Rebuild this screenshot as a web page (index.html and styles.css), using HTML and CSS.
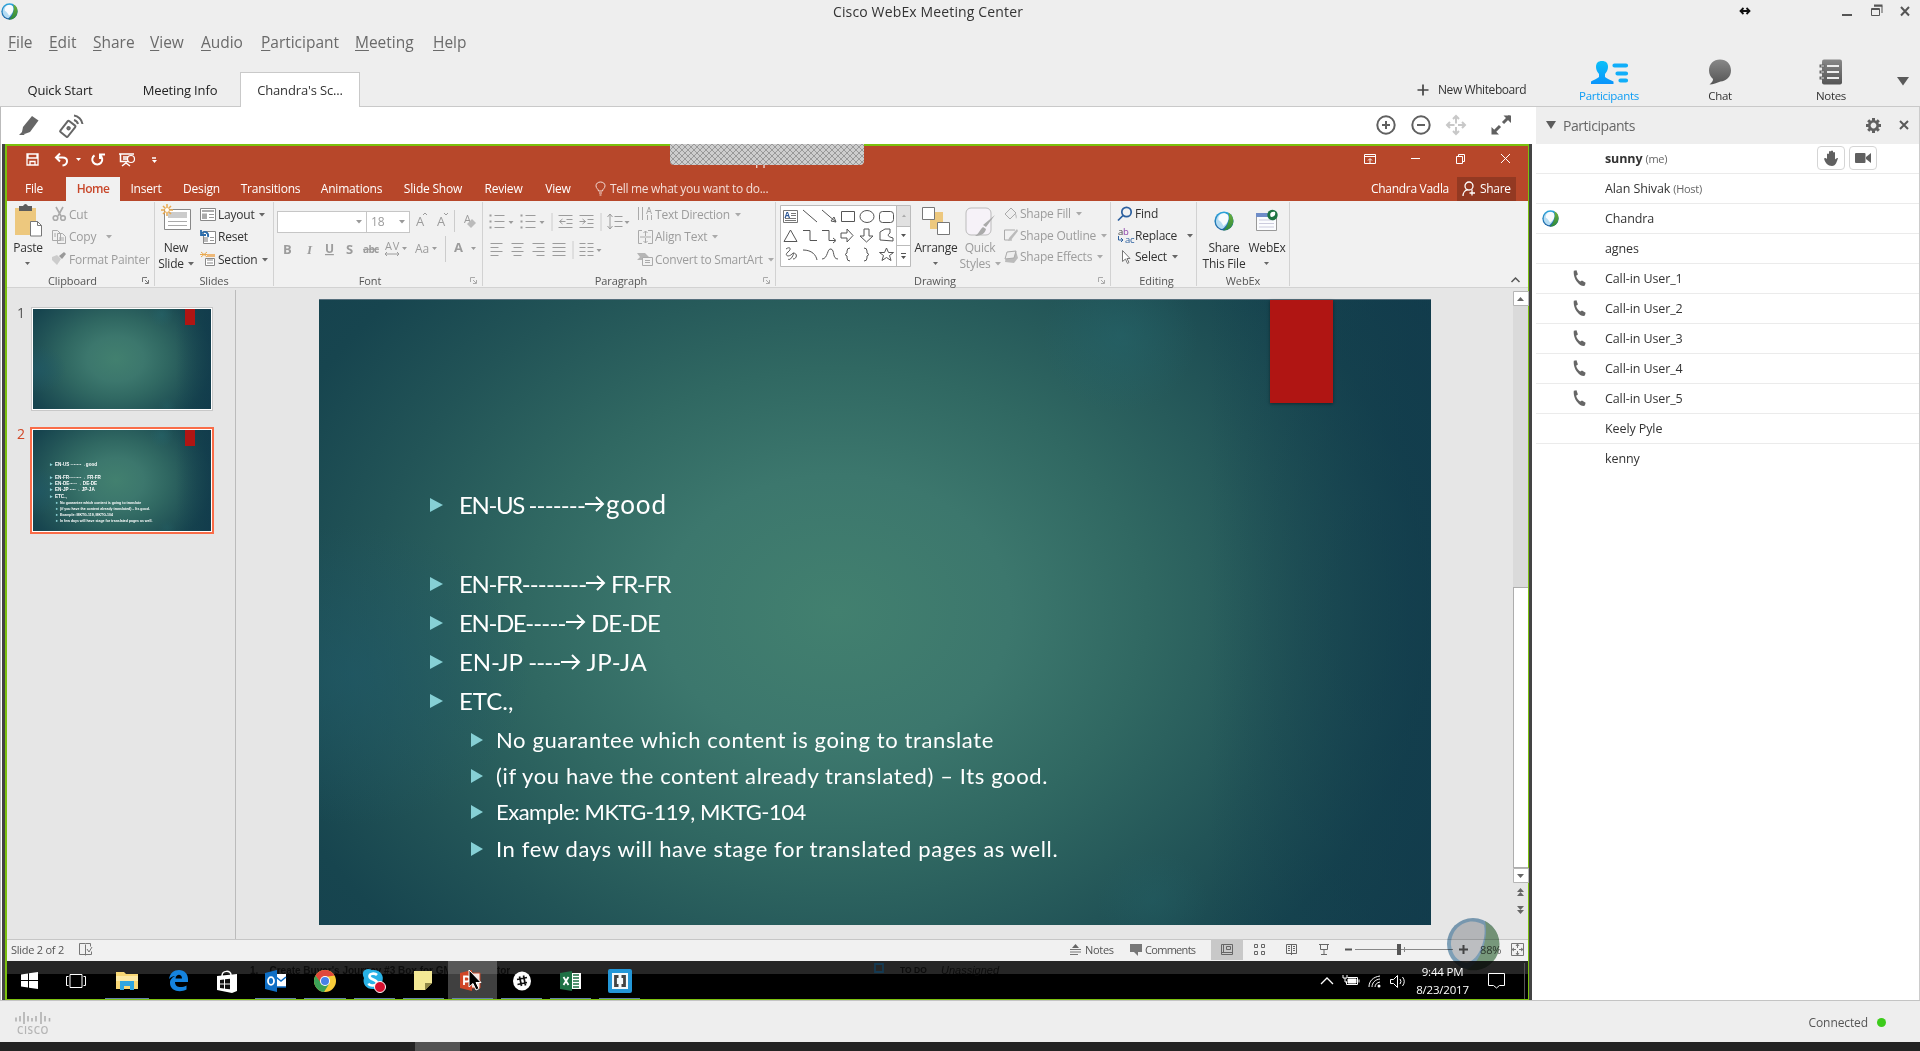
FILE: index.html
```html
<!DOCTYPE html>
<html lang="en">
<head>
<meta charset="utf-8">
<title>Cisco WebEx Meeting Center</title>
<link rel="stylesheet" href="styles.css">
</head>
<body>
<svg class="defs" width="0" height="0">
  <defs>
    <linearGradient id="orbBlue" x1="0" y1="0" x2="0" y2="1"><stop offset="0" stop-color="#2aa6dd"/><stop offset="1" stop-color="#1d5f9f"/></linearGradient>
    <linearGradient id="orbGreen" x1="0" y1="0" x2="0" y2="1"><stop offset="0" stop-color="#6fae3b"/><stop offset="1" stop-color="#2c8a3d"/></linearGradient>
    <linearGradient id="cyan" x1="0" y1="0" x2="0" y2="1"><stop offset="0" stop-color="#0cc0f8"/><stop offset="1" stop-color="#0a94fb"/></linearGradient>
    <linearGradient id="gray" x1="0" y1="0" x2="0" y2="1"><stop offset="0" stop-color="#888"/><stop offset="1" stop-color="#555"/></linearGradient>
    <pattern id="hatch" width="6" height="6" patternUnits="userSpaceOnUse"><rect width="6" height="6" fill="#cdcdcd"/><path d="M0 0L6 6M6 0L0 6" stroke="#8c8c8c" stroke-width=".8"/></pattern>
    <symbol id="orb" viewBox="0 0 20 20"><circle cx="10" cy="10" r="9.6" fill="url(#orbBlue)"/><path d="M14.5 1.6A9.6 9.6 0 0 1 9 19.5C14 16 16 8 14.5 1.6z" fill="url(#orbGreen)"/><path d="M14 4C9-.5 1.5 4 2 11c.3 4 3 6.300 6 7 3.500-1.500 8-8.500 6-14z" fill="#b4dcf3"/><path d="M14 4C9 0 3.500 4 4.500 9c2 1 3.500 3 5 6 4-3 6-6.500 4.500-11z" fill="#f7fbfe"/></symbol>
    <symbol id="caret" viewBox="0 0 6 4"><path d="M0 0h6L3 3.500z" fill="currentColor"/></symbol>
    <symbol id="launch" viewBox="0 0 7 7"><path d="M.5 5V.5H5M3 3l3 3M6.500 3v3.500H3" fill="none" stroke="currentColor"/></symbol>
    <symbol id="phone" viewBox="0 0 13 17"><path d="M.8.8l2.700-.6 1.400 4.400-1.800 1.200c.7 2.500 2 4.300 4 5.700l1.900-1.100 3.600 2.400-.7 2.800c-1.600.9-4 .1-6.200-1.900C2.200 10.500.2 5.500.8.800z" fill="#666"/></symbol>
    <symbol id="close" viewBox="0 0 10 10"><path d="M1 1l8 8M9 1L1 9" stroke="#595959" stroke-width="2" fill="none"/></symbol>
    <symbol id="arrow" viewBox="0 0 20 16"><path d="M0 8h18M11 1l7 7-7 7" fill="none" stroke="#fff" stroke-width="2"/></symbol>
  </defs>
</svg>
<div class="app">
  <header class="titlebar">
    <svg class="logo" width="17" height="17"><use href="#orb"/></svg>
    <h1>Cisco WebEx Meeting Center</h1>
    <div class="winctl">
      <svg width="170" height="22">
        <path d="M2 11h8M4.500 8L1.500 11l3 3M7.500 8l3 3-3 3" stroke="#111" stroke-width="1.800" fill="none"/>
        <path d="M103 15h10" stroke="#555" stroke-width="2"/>
        <path d="M132.500 8.500h8v7h-8zM132 9.500h9M135 6h8v7" stroke="#555" fill="none"/><path d="M135 5.500h8.500" stroke="#555" stroke-width="2"/>
        <path d="M162 7l8 8.500M170 7l-8 8.500" stroke="#555" stroke-width="2"/>
      </svg>
    </div>
  </header>
  <nav class="menu"><span><u>F</u>ile</span><span><u>E</u>dit</span><span><u>S</u>hare</span><span><u>V</u>iew</span><span><u>A</u>udio</span><span><u>P</u>articipant</span><span><u>M</u>eeting</span><span><u>H</u>elp</span></nav>
  <div class="tabs">
    <span class="tab">Quick Start</span><span class="tab">Meeting Info</span><span class="tab active">Chandra's Sc...</span>
    <span class="whiteboard"><svg width="12" height="12"><path d="M6 .5v11M.5 6h11" stroke="#444" stroke-width="1.700"/></svg>New Whiteboard</span>
    <div class="panels">
      <span class="pbtn on"><svg width="37" height="24" viewBox="0 0 37 24"><path d="M5 6c0-4 2-6 6-6s6 2 6 6c0 3-1.500 5-3 7v3c2 2 6 3 8.500 4.500V23H0v-2.500C2 19 6 18 8 16v-3C6.500 11 5 9 5 6z" fill="url(#cyan)"/><path d="M23.500 4.500H35M26.500 12.500H35M29.500 19.500H35" stroke="#10aef9" stroke-width="4.200" stroke-linecap="round"/></svg>Participants</span>
      <span class="pbtn"><svg width="24" height="26" viewBox="0 0 24 26"><path d="M12 .5C18.500.5 23 5 23 11.500S18 22 12.500 22.500C9 23.500 5 25.500 1.500 25.500 4 23.500 5 22 5 20 2.500 18 1 15 1 11.500 1 5 5.500.5 12 .5z" fill="url(#gray)"/></svg>Chat</span>
      <span class="pbtn"><svg width="24" height="26" viewBox="0 0 24 26"><rect x="3" y=".5" width="20" height="25" rx="2" fill="url(#gray)"/><path d="M8 7h12M8 13h12M8 19h12" stroke="#eee" stroke-width="2.200"/><path d="M.5 7h5M.5 13h5M.5 19h5" stroke="#666" stroke-width="3"/><path d="M2 7h3M2 13h3M2 19h3" stroke="#ddd"/></svg>Notes</span>
      <svg class="more" width="12" height="9"><path d="M0 0h12L6 8.500z" fill="#5a5a5a"/></svg>
    </div>
  </div>
  <div class="main">
    <section class="share">
      <div class="sharebar">
        <svg width="80" height="36">
          <path d="M32 9l6.500 4.500L30 25l-5.500 2-2.500-2 1-5z" fill="#666"/><path d="M23 24l-4 4h5.500z" fill="#666"/>
          <g transform="translate(68 22) rotate(38)" fill="none" stroke="#666" stroke-width="2"><rect x="-5" y="-7" width="9.500" height="14" rx="1"/><circle cx="0" cy="-1" r="1.200"/></g>
          <path d="M74 13c2 .5 3.500 2 4 4M74 8.500c4 .5 8 4 8.500 8.500" fill="none" stroke="#666" stroke-width="2"/>
        </svg>
        <svg width="150" height="36" fill="none" stroke="#606060" stroke-width="2">
          <circle cx="14" cy="18" r="8.700"/><path d="M10 18h8M14 14v8"/>
          <circle cx="49" cy="18" r="8.700"/><path d="M45 18h8"/>
          <g stroke="#c8c8c8"><path d="M84 9.500v7M84 20v7M75.500 18h7M86 18h7M81 12l3-3 3 3M81 24l3 3 3-3M78 15l-3 3 3 3M90 15l3 3-3 3"/></g>
          <path d="M121 26l7-7M131 16l7-7" stroke-width="3"/><path d="M119.500 20v7.500h7.500zM131.500 8.500h7.500V16z" fill="#606060" stroke="none"/>
        </svg>
      </div>
      <div class="desktop">
        <svg class="grip" width="194" height="21"><path d="M0 0h194v17q0 4-4 4H4q-4 0-4-4z" fill="url(#hatch)"/></svg>
        <div class="ppt-title">
          <svg width="150" height="30" fill="none" stroke="#fff" stroke-width="1.500">
            <path d="M20 8h11v11H20zM21 8v4h9V8M23 19v-3.500h5V19" stroke-width="1.300"/>
            <path d="M53 7.500l-4 4 4 4M49 11.500h6.500c6 0 6 7 0 8" stroke-width="2"/><path d="M69 12h5l-2.500 3z" fill="#fff" stroke="none"/>
            <path d="M87.500 9.300a5 5 0 1 0 5.500 0M93 13V8.500h5" stroke-width="2"/>
            <path d="M112 8h15M113.500 8v7.500h8M116 11h5M116 13h5M119 16v2M115 20l4-3 4 3"/><circle cx="124" cy="13" r="3.500" stroke-width="1.200"/>
            <path d="M145 12h4"/><path d="M145 14h5l-2.500 3z" fill="#fff" stroke="none"/>
          </svg>
          <span class="doc">pp</span>
          <svg width="150" height="30" fill="none" stroke="#fff">
            <path d="M2.500 8.500h11v9h-11zM2.500 10.500h11M8 17v-4M6 14.500l2-2 2 2"/><path d="M49 12.500h9"/><path d="M94.500 10.500h6v7h-6zM96.500 10V8.500h6v7h-2"/><path d="M139 8l9 9M148 8l-9 9"/>
          </svg>
        </div>
        <nav class="ppt-tabs"><span>File</span><span class="home">Home</span><span>Insert</span><span>Design</span><span>Transitions</span><span>Animations</span><span>Slide Show</span><span>Review</span><span>View</span>
          <span class="tell"><svg width="11" height="15" fill="none" stroke="#f3ded8"><path d="M3.500 10C3.500 8 1 7.500 1 4.800 1 2.500 3 1 5.500 1S10 2.500 10 4.800C10 7.500 7.500 8 7.500 10zM4 12h3M4.500 14h2"/></svg>Tell me what you want to do...</span>
          <span class="user">Chandra Vadla</span>
          <span class="sharebtn"><svg width="14" height="16" fill="none" stroke="#fff" stroke-width="1.300"><circle cx="7" cy="5" r="4"/><path d="M1 15c0-3 2-6 5-6.500M10 8.500v6M7.500 12H13"/></svg>Share</span>
        </nav>
        <div class="ribbon">
          <section class="group clip">
            <div class="gbody">
              <div class="big"><svg width="28" height="35"><path d="M1 5h21v27H1z" fill="#edc87e"/><path d="M5 3h4q2.500-4 5 0h4v5H5z" fill="#5c5c5c"/><path d="M16.500 18.500h7l4 4v10.500h-11z" fill="#fff" stroke="#777"/><path d="M23.500 18.500v4h4" fill="none" stroke="#777"/></svg>Paste<svg class="c" width="6" height="16" viewBox="0 -6 6 16"><path d="M0 0h5L2.500 3z" fill="currentColor"/></svg></div>
              <div class="rows off">
                <span><svg width="17" height="16" fill="none" stroke="#aaa" stroke-width="1.600"><path d="M5 1l5 9M12 1l-5 9"/><circle cx="4.500" cy="12" r="2.300"/><circle cx="12" cy="12" r="2.300"/></svg>Cut</span>
                <span><svg width="17" height="16" fill="#f1f1f1" stroke="#aaa"><path d="M1.500 1.500h5l3 3v7h-8zM6.500 4.500h5l3 3v7h-8zM3 5h2M3 7h2M8 9h5M8 11h5"/></svg>Copy<svg class="c far" width="6" height="4"><use href="#caret"/></svg></span>
                <span><svg width="17" height="16"><path d="M1 6l5-2 4 4-4 6-5-5z" fill="#ccc"/><path d="M8 5l5-4 2 2-4 5z" fill="#999"/></svg>Format Painter</span>
              </div>
            </div>
            <footer>Clipboard<svg width="7" height="7"><use href="#launch"/></svg></footer>
          </section>
          <section class="group slides">
            <div class="gbody">
              <div class="big"><svg width="32" height="35"><path d="M4.500 6.500h26v20h-26z" fill="#fff" stroke="#888"/><path d="M8 9h19v6H8z" fill="#ccc"/><path d="M8 18.500h19M8 22.500h19" stroke="#aaa"/><path d="M7 1v12M1 7h12M3 3l8 8M11 3l-8 8" stroke="#e9a94f" stroke-width="1.500"/><circle cx="7" cy="7" r="2" fill="#fff"/></svg>New<span>Slide<svg class="c" width="6" height="4"><use href="#caret"/></svg></span></div>
              <div class="rows">
                <span><svg width="18" height="16"><path d="M1.500 2.500h15v12h-15z" fill="#fff" stroke="#888"/><path d="M3 4h12v2H3zM3 7.500h5V13H3z" fill="#aaa"/><path d="M10 8.500h5M10 11.500h5" stroke="#999"/></svg>Layout<svg class="c" width="6" height="4"><use href="#caret"/></svg></span>
                <span><svg width="18" height="16"><path d="M4.500 2.500h12v12h-12z" fill="#fff" stroke="#888"/><path d="M5 8h4v5H5z" fill="#bbb"/><path d="M11 8.500h4M11 11.500h4" stroke="#999"/><path d="M2 1v5h5M2 5c3-4 8-2 7 3" stroke="#2b6cab" stroke-width="1.800" fill="none"/></svg>Reset</span>
                <span><svg width="18" height="16"><path d="M1 3.500h8M2 1l6 5M8 1L2 6" stroke="#e9a94f"/><path d="M8 3h8v3H8z" fill="#edb878"/><path d="M6.500 7.500h9v7h-9zM8 9h6M8 12h6" fill="#fff" stroke="#888"/></svg>Section<svg class="c" width="6" height="4"><use href="#caret"/></svg></span>
              </div>
            </div>
            <footer>Slides</footer>
          </section>
          <section class="group font">
            <div class="strip off">
              <span class="combo"><svg class="c" width="6" height="4"><use href="#caret"/></svg></span><span class="combo size">18<svg class="c" width="6" height="4"><use href="#caret"/></svg></span>
              <svg width="66" height="28"><g font-size="13" fill="currentColor"><text x="7" y="19">A</text><text x="28" y="19">A</text><text x="55" y="16" font-size="11">A</text></g><path d="M14 8l2-2 2 2M35 6l2 2 2-2" stroke="currentColor" fill="none"/><path d="M45.500 3v22" stroke="#ccc"/><path d="M58 17l5-5 4 4-5 5z" fill="#bbb"/></svg>
            </div>
            <div class="strip off">
              <svg width="210" height="28"><g font-size="13" fill="currentColor"><text x="10" y="19" font-weight="bold">B</text><text x="34" y="19" font-style="italic" font-family="Liberation Serif" font-weight="bold">I</text><text x="52" y="18" text-decoration="underline" font-weight="bold" font-size="12">U</text><text x="73" y="19" font-weight="bold">S</text><text x="90" y="18" font-size="10" font-weight="bold" text-decoration="line-through" textLength="16">abc</text><text x="112" y="15" font-size="11" textLength="14">AV</text><text x="142" y="18" font-size="12" textLength="14">Aa</text><text x="181" y="17" font-weight="bold">A</text></g><path d="M112 19h14M114 17l-2 2 2 2M124 17l2 2-2 2" stroke="currentColor" fill="none"/><path d="M172.500 1v26" stroke="#ccc"/><g fill="currentColor"><path d="M129 12h5l-2.500 3zM159 12h5l-2.500 3zM198 12h5l-2.500 3z"/></g></svg>
            </div>
            <footer>Font<svg class="off" width="7" height="7"><use href="#launch"/></svg></footer>
          </section>
          <section class="group para">
            <div class="gbody">
              <svg class="off" width="154" height="62" viewBox="-.5 -1 154 62" fill="none" stroke="currentColor">
                <path d="M11 12.500h10M11 18.500h10M11 24.500h10M42 12.500h10M42 18.500h10M42 24.500h10" /><path d="M6 12.500h2M6 18.500h2M6 24.500h2M37 12.500h2M37 18.500h2M37 24.500h2" stroke-width="2"/>
                <path d="M68.500 10v18M117.500 10v18M89.500 38v18" stroke="#ccc"/>
                <path d="M75 12.500h14M83 16.500h6M83 20.500h6M75 24.500h14M96 12.500h14M104 16.500h6M104 20.500h6M96 24.500h14M76 18.500h6M79 16l-3 2.500 3 2.500M96 18.500h6M99 16l3 2.500-3 2.500"/>
                <path d="M126.500 12v14M124 14l2.500-3 2.500 3M124 23l2.500 3 2.500-3M131 13.500h8M131 18.500h8M131 23.500h8"/>
                <path d="M7 42.500h12M7 46.500h8M7 50.500h12M7 54.500h8M28 42.500h12M30 46.500h8M28 50.500h12M30 54.500h8M49 42.500h12M53 46.500h8M49 50.500h12M53 54.500h8M69 42.500h13M69 46.500h13M69 50.500h13M69 54.500h13M96 42.500h6M96 46.500h6M96 50.500h6M96 54.500h6M104 42.500h6M104 46.500h6M104 50.500h6M104 54.500h6" transform="translate(0 -2)"/>
                <g fill="currentColor" stroke="none"><path d="M25 18h5l-2.500 3zM56 18h5l-2.500 3zM141 18h5l-2.500 3zM113 46h5l-2.500 3z"/></g>
              </svg>
              <div class="rows off">
                <span><svg width="17" height="16" fill="none" stroke="#aaa"><path d="M1.500 1v13M5.500 1v13M10.500 9v5M14.500 9v5M9.500 8l2.500-7 2.500 7M10.500 5.500h3"/></svg>Text Direction<svg class="c" width="6" height="4"><use href="#caret"/></svg></span>
                <span><svg width="17" height="16" fill="none" stroke="#aaa"><path d="M5 1.500H1.500v13H5M11 1.500h4.500v13H11M8.500 2v5M6.500 4l2-2 2 2M8.500 14V9M6.500 12l2 2 2-2M3 8h11"/></svg>Align Text<svg class="c" width="6" height="4"><use href="#caret"/></svg></span>
                <span><svg width="17" height="16"><path d="M0 2h8l4 4-3 3H0l3-3z" fill="#b5b5b5"/><path d="M5.500 6.500h10v8h-10zM8 9.500h5M8 11.500h5" fill="#f1f1f1" stroke="#aaa"/></svg>Convert to SmartArt<svg class="c" width="6" height="4"><use href="#caret"/></svg></span>
              </div>
            </div>
            <footer>Paragraph<svg class="off" width="7" height="7"><use href="#launch"/></svg></footer>
          </section>
          <section class="group draw">
            <div class="gbody">
              <svg class="shapes" width="131" height="62" fill="none" stroke="#555">
                <path d="M.5.500h130v61H.5z" fill="#fff" stroke="#bbb"/><path d="M117 1h13v20h-13z" fill="#e1e1e1" stroke="none"/><path d="M116.500 1v60M117 21.500h13M117 40.500h13" stroke="#bbb"/><path d="M122 12h4l-2-2.500z" fill="#aaa" stroke="none"/><path d="M121 29h5l-2.500 3zM121 51h5l-2.500 3z" fill="#555" stroke="none"/><path d="M121 48.500h5"/>
                <path d="M3.500 5.500h14v12h-14zM11 8.500h5M11 10.500h5M5 13.500h11M5 15.500h11" stroke="#777"/><text x="4.500" y="12.500" font-size="8" font-weight="bold" fill="#2b5797" stroke="none">A</text>
                <path d="M23 5l14 12M42 5l14 12M56 17l-5-1 3-4z"/><path d="M61.500 6.500h13v10h-13z"/><ellipse cx="87" cy="11.500" rx="7" ry="6"/><rect x="99.500" y="6.500" width="14" height="11" rx="3"/>
                <path d="M4 36.500h13L10.500 25zM23 25.500h7v10h7M42 25.500h7v10h6M53 33l3 2.500-3 2.500M61 28h6v-4l6 6.500-6 6.500v-4h-6zM84 24v7h-4l6.500 6 6.500-6h-4v-7zM100 35V27l5-3h5v4q-5 3 3 5v3z"/>
                <path d="M6 44c4-3 6 0 2 3s0 6 4 2-1 8-4 5M13 48c5 0 4 6 0 6M23 45c9 0 13 5 14 10M42 54c6 0 5-11 9-10s1 10 7 10M70 43q-3 0-3 3v2l-2 1.500 2 1.500v2q0 3 3 3M84 43q3 0 3 3v2l2 1.500-2 1.500v2q0 3-3 3M106.500 43l2 4.500h5l-4 3 1.500 5-4.500-3-4.500 3 1.500-5-4-3h5z"/>
              </svg>
              <div class="big arr"><svg width="30" height="35"><path d="M9 9h13v17H9z" fill="#edc87e"/><path d="M1.500 4.500h12v12h-12zM16.500 19.500h12v12h-12z" fill="#fff" stroke="#777"/></svg>Arrange<svg class="c" width="6" height="16" viewBox="0 -6 6 16"><path d="M0 0h5L2.500 3z" fill="currentColor"/></svg></div>
              <div class="big off quick"><svg width="31" height="35"><rect x="1" y="5" width="25" height="27" rx="5" fill="#f6f2f8" stroke="#bbb"/><path d="M30 12l-9 12-3-2zM18 24l3 2c-1 5-6 7-11 7 4-2 5-7 8-9z" fill="#aaa"/></svg>Quick<span>Styles<svg class="c" width="6" height="4"><use href="#caret"/></svg></span></div>
              <div class="rows off tight">
                <span><svg width="16" height="16"><path d="M2 8l6-6 5 5-6 6z" fill="#eee" stroke="#aaa"/><path d="M12 7q3 3 1 6z" fill="#bbb"/></svg>Shape Fill<svg class="c" width="6" height="4"><use href="#caret"/></svg></span>
                <span><svg width="16" height="16"><path d="M12 3H1.500v10H9" fill="none" stroke="#aaa"/><path d="M14 2L6 11l-1 3 3-1 7-9z" fill="#bbb"/></svg>Shape Outline<svg class="c" width="6" height="4"><use href="#caret"/></svg></span>
                <span><svg width="16" height="16"><path d="M4 3l9-1 2 7-4 5-9-1z" fill="#bbb"/><path d="M4 3l9-1-2 7-9 1z" fill="#eee" stroke="#aaa"/></svg>Shape Effects<svg class="c" width="6" height="4"><use href="#caret"/></svg></span>
              </div>
            </div>
            <footer>Drawing<svg class="off" width="7" height="7"><use href="#launch"/></svg></footer>
          </section>
          <section class="group edit">
            <div class="gbody"><div class="rows tight">
              <span><svg width="17" height="16" fill="none" stroke="#2b5f9e" stroke-width="1.700"><circle cx="9.500" cy="6" r="4.700"/><path d="M6 9.500L1 14.500"/></svg>Find</span>
              <span><svg width="17" height="17"><text x="1" y="8" font-size="9.500" fill="#444">a<tspan fill="#8a3fa8">b</tspan></text><text x="8" y="16" font-size="9.500" fill="#2b5f9e">ac</text><path d="M1.500 9v4h4M4 11l2 2-2 2" fill="none" stroke="#2b5f9e"/></svg>Replace<svg class="c far" width="6" height="4"><use href="#caret"/></svg></span>
              <span><svg width="17" height="16"><path d="M5.500 1.500v11l3-2.500 2 4.500 1.500-1-2-4h3z" fill="#fff" stroke="#777"/></svg>Select<svg class="c" width="6" height="4"><use href="#caret"/></svg></span>
            </div></div>
            <footer>Editing</footer>
          </section>
          <section class="group webex">
            <div class="gbody">
              <div class="big"><svg width="20" height="35"><use href="#orb" y="8" width="20" height="20"/></svg>Share<span>This File</span></div>
              <div class="big"><svg width="24" height="35"><path d="M1.500 10.500h20v17h-20z" fill="#fbfcfe" stroke="#999"/><path d="M1 10h15v4H1z" fill="#6f8dc8"/><path d="M4 17h15M4 20.500h15M4 24h15" stroke="#ccd" /><circle cx="17.500" cy="12" r="5.200" fill="#1c7341"/><path d="M20 9c-4-1-6 2-4 5 3 0 5-2 4-5z" fill="#fff"/></svg>WebEx<svg class="c" width="6" height="16" viewBox="0 -6 6 16"><path d="M0 0h5L2.500 3z" fill="currentColor"/></svg></div>
            </div>
            <footer>WebEx</footer>
          </section>
          <svg class="collapse" width="9" height="6"><path d="M.5 5l4-4 4 4" fill="none" stroke="#555" stroke-width="1.500"/></svg>
        </div>
        <div class="work">
          <aside class="thumbs">
            <div class="trow"><b>1</b><div class="thumb"><i></i></div></div>
            <div class="trow sel"><b>2</b><div class="thumb"><i></i>
              <ul class="mini"><li>EN-US -------&#8594;good</li><li class="gap"></li><li>EN-FR--------&#8594; FR-FR</li><li>EN-DE-----&#8594; DE-DE</li><li>EN-JP ----&#8594; JP-JA</li><li>ETC.,</li><li class="s">No guarantee which content is going to translate</li><li class="s">(if you have the content already translated) – Its good.</li><li class="s">Example: MKTG-119, MKTG-104</li><li class="s">In few days will have stage for translated pages as well.</li></ul></div></div>
          </aside>
          <div class="canvas">
            <article class="slide"><i></i>
              <ul>
                <li class="l1"><span class="k">EN-US </span><span class="h">-------</span><svg width="20" height="16"><use href="#arrow"/></svg><span class="good">good</span></li>
                <li><span class="k">EN-FR</span><span class="h">--------</span><svg width="20" height="16"><use href="#arrow"/></svg><span class="k"> FR-FR</span></li>
                <li><span class="k">EN-DE</span><span class="h">-----</span><svg width="20" height="16"><use href="#arrow"/></svg><span class="k de"> DE-DE</span></li>
                <li><span class="jp">EN-JP </span><span class="h">----</span><svg width="20" height="16"><use href="#arrow"/></svg><span class="ja"> JP-JA</span></li>
                <li>ETC.,</li>
                <li class="s">No guarantee which content is going to translate</li>
                <li class="s">(if you have the content already translated) – Its good.</li>
                <li class="s s3">Example: MKTG-119, MKTG-104</li>
                <li class="s">In few days will have stage for translated pages as well.</li>
              </ul>
            </article>
          </div>
          <div class="vscroll">
            <svg width="15" height="15"><path d="M.5.500h15v14H.5z" fill="#fff" stroke="#b5b5b5"/><path d="M4 10h7L7.500 6z" fill="#666"/></svg>
            <div class="track"><div class="bar"></div></div>
            <svg width="15" height="66"><path d="M.5.500h15v14H.5z" fill="#fff" stroke="#b5b5b5"/><path d="M4 6h7l-3.500 4zM4 24h7l-3.500-4zM4 28h7l-3.500-4zM4 38h7l-3.500 4zM4 42h7l-3.500 4z" fill="#666"/></svg>
          </div>
        </div>
        <div class="status">
          <span class="count">Slide 2 of 2</span>
          <svg width="15" height="15" fill="none" stroke="#777"><path d="M7.500 2.500v11M7.500 12.500h-6v-11h6M7.500 1.500h5v3M7.500 12.500h6v-3M9 7l2 3 3-5"/></svg>
          <span class="notes"><svg width="11" height="11"><path d="M2 4h7L5.500 0z" fill="#666"/><path d="M0 5.500h11M0 8h11M0 10.500h8" stroke="#777"/></svg>Notes</span>
          <span class="comments"><svg width="12" height="12"><path d="M0 0h12v8H8v4L4 8H0z" fill="#777"/></svg>Comments</span>
          <svg class="views" width="130" height="21" fill="none" stroke="#666"><path d="M0 0h32v21H0z" fill="#c8c8c8" stroke="none"/><path d="M10.500 5.500h11v10h-11zM10 13.500h11M12.500 5v8M15.500 7.500h4v3h-4z"/><path d="M43.500 5.500h3v3h-3zM50.500 5.500h3v3h-3zM43.500 12.500h3v3h-3zM50.500 12.500h3v3h-3z"/><path d="M75.500 5.500h10v9h-10zM80.500 5v11M77 7.500h2M77 9.500h2M77 11.500h2M82 7.500h2M82 9.500h2M82 11.500h2"/><path d="M108 5.500h10M109.500 6v4.500h7V6M113 11v4M110 15.500h6"/></svg>
          <svg width="115" height="21" fill="none" stroke="#555"><path d="M0 10.500h7" stroke-width="2"/><path d="M10 10.500h98" stroke="#888"/><path d="M59.500 8v5" stroke="#888"/><path d="M52 5h4v11h-4z" fill="#555" stroke="none"/></svg>
          <svg class="plus" width="9" height="21"><path d="M0 10.500h9M4.500 6v9" stroke="#555" stroke-width="2"/></svg>
          <span class="pct">88%</span>
          <svg width="13" height="13" fill="none" stroke="#777"><path d="M.5.500h12v12H.5zM6.500 1v4M6.500 8v4M1 6.500h4M8 6.500h4M5 3l1.500-2L8 3M5 10l1.500 2L8 10M3 5L1 6.500 3 8M10 5l2 1.500L10 8"/></svg>
        </div>
        <div class="taskbar">
          <span class="ghost g1">1.&nbsp;&nbsp;&nbsp; Create Buyer's Journey #3 Box for GMS Calculator</span>
          <span class="ghost g2">TO DO</span><span class="ghost g3">Unassigned</span>
          <span class="t"><svg width="17" height="17" fill="#fff"><path d="M0 2.500l7-1V8H0zM8 1.300L17 0v8H8zM0 9h7v6.500l-7-1zM8 9h9v8l-9-1.300z"/></svg></span>
          <span class="t"><svg width="20" height="16" fill="none" stroke="#fff"><path d="M4 1.500h12v13H4zM2.500 3.500h-2v9h2M17.500 3.500h2v9h-2"/></svg></span>
          <span class="t run"><svg width="22" height="19"><path d="M0 1h8l2 2h12v15H0z" fill="#f8d775"/><path d="M0 5h22v5H0z" fill="#fde9a4"/><path d="M4 10h14v9h-4v-4H8v4H4z" fill="#2fa5e0"/></svg></span>
          <span class="t"><svg width="20" height="21"><path d="M1 9C2 3 6 0 11 0c5.500 0 9 4 9 9v3H7c0 6 7 6 11.500 3.500v4C12 23 2 21 2 13c0-4 3-6 5-7-2 0-4 1-6 3zM7.500 8.500H14c0-5-6-5-6.500 0z" fill="#1583de" fill-rule="evenodd"/></svg></span>
          <span class="t"><svg width="20" height="24"><path d="M5 7C5 1 14 1 14 6" fill="none" stroke="#fff" stroke-width="1.500"/><path d="M0 7l20-2v17l-5 2-15-3z" fill="#fff"/><path d="M3 11l4-.5v4H3zM8 10.300l5-.5v4.700H8zM3 15.500h4v4l-4-.5zM8 15.500h5v4.800l-5-.6z" fill="#111"/></svg></span>
          <span class="t run"><svg width="21" height="22"><path d="M10 4h11v13H10z" fill="#fff"/><path d="M11 7l5 4 5-4M11 17h10" fill="none" stroke="#0a6bc4" stroke-width="1.600"/><path d="M0 3l12-3v22L0 19z" fill="#0f6fc5"/><ellipse cx="6" cy="11" rx="3" ry="3.800" fill="none" stroke="#fff" stroke-width="1.800"/></svg></span>
          <span class="t run"><svg width="22" height="22"><circle cx="11" cy="11" r="11" fill="#f9cd39"/><path d="M1.500 5.500A11 11 0 0 1 20.500 5.500L11 7l-4 7z" fill="#e0483b"/><path d="M1.500 5.500A11 11 0 0 0 10 22l5-8-8-1z" fill="#3ba257"/><circle cx="11" cy="11" r="5" fill="#fff"/><circle cx="11" cy="11" r="4" fill="#4780e8"/></svg></span>
          <span class="t run"><svg width="23" height="24"><path d="M2 1q3-2 7 0c8-1 13 6 10 12 2 5-3 9-8 7C4 21-1 15 1 9-1 5 0 2 2 1z" fill="#29b2e6"/><path d="M14 6c-2-2-8-2-7.500 1.500S14 10 14 14c-.5 3-7 3.500-8.500.5" fill="none" stroke="#fff" stroke-width="2.600"/><circle cx="17" cy="18" r="5.500" fill="#d8102f" stroke="#fff"/></svg></span>
          <span class="t run"><svg width="18" height="19"><path d="M0 0h18v12l-7 7H0z" fill="#f3e895"/><path d="M18 12h-7v7z" fill="#8f8748"/></svg></span>
          <span class="t run cur"><svg width="26" height="24"><path d="M10 4h11v15H10z" fill="#f5e6e1" stroke="#c8492a"/><path d="M1 4l12-3v21L1 19z" fill="#d04627"/><path d="M5 16V7.500h3q2.500 0 2.500 2.500T8 12.500H5" fill="none" stroke="#fff" stroke-width="1.800"/><path d="M10 1v17l4-3.500 3 6.500 3-1.500-3-6h5z" fill="#000" stroke="#fff"/></svg></span>
          <span class="t run"><svg width="18" height="20"><ellipse cx="9" cy="10" rx="9" ry="9.500" fill="#fff"/><path d="M4 8.500l10-2M4.500 13.500l9.500-2M6.500 5.500l2 9.500M10.500 4.500l2 10" stroke="#111" stroke-width="1.700"/></svg></span>
          <span class="t run"><svg width="21" height="20"><path d="M10 2h11v16H10z" fill="#fff"/><path d="M13 4h6M13 7h6M13 10h6M13 13h6M13 16h6" stroke="#1d7044" stroke-width="1.600"/><path d="M0 2l12-2v20L0 18z" fill="#1e7145"/><path d="M3.500 6l5 8M8.500 6l-5 8" stroke="#fff" stroke-width="1.800"/></svg></span>
          <span class="t run"><svg width="24" height="24"><rect width="24" height="24" rx="2" fill="#2397d8"/><path d="M4 4h16v16H4z" fill="#f4f8fa"/><path d="M10.500 7.500H7.500v9h3M13.500 7.500h3v9h-3" fill="none" stroke="#444" stroke-width="2.800"/></svg></span>
          <svg class="badge" width="10" height="10"><path d="M1 1h8v8H1z" fill="none" stroke="#153a52" stroke-width="1.800"/></svg>
          <div class="tray">
            <svg width="86" height="20" fill="none" stroke="#fff"><path d="M1 13l6-6 6 6" stroke-width="1.300"/><path d="M27.500 6.500h10v7h-11v-3M39 8.500v3" /><path d="M28 8h8v4h-8z" fill="#fff"/><path d="M23 4v3h4V4M25 7v4h2"/><path d="M49 16c0-6 4-10 11-11M52 16c0-4 3-7.500 8-8M55 16c0-2.500 2-4.500 5-5"/><circle cx="59" cy="15" r="1.500" fill="#fff" stroke="none"/><path d="M70.500 8.500h3l4-4v12l-4-4h-3zM80 8q2 2.500 0 5M82.500 6q3.500 4.500 0 9"/></svg>
            <div class="clock">9:44 PM<br>8/23/2017</div>
            <svg width="17" height="17" fill="none" stroke="#fff"><path d="M.5 1.500h16v12h-5L8.500 16l-3-2.500h-5z"/></svg>
            <div class="peek"></div>
          </div>
        </div>
        <svg class="watermark" width="52" height="52"><circle cx="26" cy="26" r="26" fill="#6592b2"/><path d="M38 3A26 26 0 0 1 20 51.500C34 44 42 20 38 3z" fill="#5d8a62"/><path d="M37 7C22-3 3 9 4 27c1 10 6 16 15 18C32 43 40 20 37 7z" fill="#b9bcc0"/></svg>
      </div>
    </section>
    <aside class="people">
      <header><svg width="10" height="8"><path d="M0 0h10L5 8z" fill="#5c5c5c"/></svg><span>Participants</span><svg class="gear" width="15" height="15" viewBox="-7.500 -7.500 15 15" fill="none" stroke="#606060"><circle r="4.200" stroke-width="2.600"/><path d="M0-7.500v3M0 7.500v-3M-7.500 0h3M7.500 0h-3M-5.300-5.300l2 2M5.300 5.300l-2-2M-5.300 5.300l2-2M5.300-5.300l-2 2" stroke-width="3"/></svg><svg width="10" height="10"><use href="#close"/></svg></header>
      <div class="p"><span class="i"></span><span class="j"></span><b>sunny</b><small>(me)</small>
        <span class="pill"><svg width="14" height="16"><path d="M3 9V4q1-1 2 0v3V1.500q1-1 2 0V7 1q1-1 2 0v6.500V2.500q1-1 2 0v7q1.500-2 3-1.500c-1 3-2 8-6 8s-7-3-8-7.500q1.500-1 3 .5z" fill="#606060"/></svg></span>
        <span class="pill"><svg width="16" height="10"><rect width="10.500" height="10" rx="1" fill="#606060"/><path d="M11 4l5-4v10l-5-4z" fill="#606060"/></svg></span></div>
      <div class="p"><span class="i"></span><span class="j"></span>Alan Shivak<small>(Host)</small></div>
      <div class="p"><span class="i"><svg width="17" height="17"><use href="#orb"/></svg></span><span class="j"></span>Chandra</div>
      <div class="p"><span class="i"></span><span class="j"></span>agnes</div>
      <div class="p"><span class="i"></span><span class="j"><svg width="13" height="17"><use href="#phone"/></svg></span>Call-in User_1</div>
      <div class="p"><span class="i"></span><span class="j"><svg width="13" height="17"><use href="#phone"/></svg></span>Call-in User_2</div>
      <div class="p"><span class="i"></span><span class="j"><svg width="13" height="17"><use href="#phone"/></svg></span>Call-in User_3</div>
      <div class="p"><span class="i"></span><span class="j"><svg width="13" height="17"><use href="#phone"/></svg></span>Call-in User_4</div>
      <div class="p"><span class="i"></span><span class="j"><svg width="13" height="17"><use href="#phone"/></svg></span>Call-in User_5</div>
      <div class="p"><span class="i"></span><span class="j"></span>Keely Pyle</div>
      <div class="p last"><span class="i"></span><span class="j"></span>kenny</div>
    </aside>
  </div>
  <footer class="foot">
    <div class="cisco"><svg width="36" height="12" stroke="#b0b0b0" stroke-width="1.600"><path d="M1 5.500v4M5 4v5.500M9 0v12M13 4v5.500M17 6v3.500M21 4v5.500M26 0v12M30 4v5.500M34.500 6v3.500"/></svg>CISCO</div>
    <span>Connected</span><i></i>
  </footer>
  <div class="os"><div></div></div>
</div>
</body>
</html>
```
FILE: styles.css
```css
* { box-sizing: border-box; }
body { margin: 0; font-family: "Open Sans", "Noto Sans", sans-serif; color: #222; overflow: hidden; }
svg { display: block; flex: none; overflow: visible; }
.defs { position: absolute; }
.app { width: 1920px; height: 1051px; background: #eee; display: flex; flex-direction: column; white-space: nowrap; }

.titlebar { height: 22px; display: grid; grid-template-columns: 100px 1656px 164px; align-items: center; }
.logo { margin-left: 1px; }
.titlebar h1 { margin: 0; font-size: 14px; font-weight: 400; letter-spacing: .14px; text-align: center; color: #333; }
.winctl { margin-left: -17px; }
.menu { height: 40px; padding-left: 8px; display: grid; grid-template-columns: 41px 44px 57px 51px 60px 94px 78px auto; align-items: center; font-size: 15.500px; letter-spacing: -.02px; color: #6a6a6a; line-height: 38px; }
.menu u { text-underline-offset: 2px; }

.tabs { height: 45px; display: flex; border-bottom: 1px solid #c9c9c9; align-items: flex-end; font-size: 13px; letter-spacing: -.15px; color: #222; }
.tab { width: 120px; height: 34px; line-height: 36px; text-align: center; }
.tab.active { background: #fff; border: 1px solid #c9c9c9; border-bottom: 0; height: 35px; margin-bottom: -1px; color: #333; line-height: 34px; }
.whiteboard { display: flex; gap: 9px; align-items: center; margin-left: 1057px; height: 32px; font-size: 12px; letter-spacing: -.42px; color: #333; }
.panels { display: grid; grid-template-columns: 111px 111px 111px 72px; align-items: end; width: 405px; margin-left: auto; margin-right: -38px; height: 50px; }
.pbtn { display: flex; flex-direction: column; align-items: center; font-size: 11.500px; line-height: 20px; color: #333; letter-spacing: -.3px; padding-left: 1px; }
.pbtn svg { margin-bottom: 1px; }
.pbtn.on { color: #0c9df5; }
.more { margin: 0 0 20px 11px; }

.main { height: 895px; display: grid; grid-template-columns: 1536px 384px; background: #fff; }
.share { border-left: 1px solid #bbb; padding-left: 1px; }
.sharebar { height: 37px; display: flex; justify-content: space-between; padding-right: 14px; }
.sharebar svg:first-child { margin-left: -2px; }
.desktop { width: 1530px; height: 857px; border: solid #444; border-width: 0 3px; position: relative; box-shadow: inset 2px 2px #7cc10e, inset -1px -2px #7cc10e; padding: 2px 1px 2px 2px; display: flex; flex-direction: column; background: #f1f1f1; }
.desktop > div { flex: none; }
.grip { position: absolute; left: 665px; top: 0; z-index: 2; }

.ppt-title { height: 31px; background: #b7472a; display: flex; justify-content: space-between; }
.ppt-title svg:last-child { margin-right: 16px; }
.doc { color: #fff; font-size: 12px; line-height: 29px; margin-right: -6px; }
.ppt-tabs { height: 24px; background: #b7472a; color: #fff; font-size: 12px; line-height: 24px; display: flex; letter-spacing: -.2px; text-align: center; }
.ppt-tabs > span { flex: none; }
.ppt-tabs > span:nth-child(1) { width: 54px; margin-right: 5px; }
.ppt-tabs > span:nth-child(2) { width: 54px; background: #f1f1f1; color: #c8472a; font-weight: 600; letter-spacing: -.5px; }
.ppt-tabs > span:nth-child(3) { width: 52px; }
.ppt-tabs > span:nth-child(4) { width: 59px; }
.ppt-tabs > span:nth-child(5) { width: 79px; }
.ppt-tabs > span:nth-child(6) { width: 83px; }
.ppt-tabs > span:nth-child(7) { width: 80px; }
.ppt-tabs > span:nth-child(8) { width: 61px; }
.ppt-tabs > span:nth-child(9) { width: 48px; }
.ppt-tabs .tell { display: flex; align-items: center; gap: 4px; margin-left: 13px; color: #f3ded8; letter-spacing: -.3px; }
.ppt-tabs .user { margin-left: auto; margin-right: 8px; letter-spacing: -.3px; }
.ppt-tabs .sharebtn { background: #933922; width: 59px; display: flex; align-items: center; gap: 4px; padding-left: 5px; margin-right: 12px; letter-spacing: -.3px; }

.ribbon { height: 87px; background: #f1f1f1; border-bottom: 1px solid #d2d2d2; display: flex; font-size: 12px; color: #333; letter-spacing: -.22px; position: relative; }
.group { position: relative; display: flex; flex-direction: column; height: 84px; margin-top: 1px; border-right: 1px solid #d2d2d2; }
.group footer { margin-top: auto; height: 16px; line-height: 15px; text-align: center; font-size: 11px; color: #555; letter-spacing: -.1px; margin-bottom: -3px; }
.group footer:has(svg) { padding-right: 16px; }
.group footer svg { position: absolute; right: 5px; bottom: 2px; color: #777; }
.group footer svg.off { color: #aaa; }
.gbody { display: flex; height: 68px; }
.off { color: #9c9c9c; }
.c { color: #666; }
.off .c { color: #aaa; }
.rows { display: grid; grid-template-rows: repeat(3, 22.500px); padding-top: 1px; }
.rows.tight { grid-template-rows: repeat(3, 21.500px); }
.rows > span { display: flex; align-items: center; gap: 1px; }
.rows .c { margin-left: 4px; margin-top: 1px; }
.rows .c.far { margin-left: 9px; }
.big { display: flex; flex-direction: column; align-items: center; line-height: 16px; padding-top: 1px; }
.big > svg:first-child { margin-bottom: 2px; }
.big > span { display: flex; align-items: center; gap: 4px; }
.clip { width: 148px; }
.clip .big { width: 42px; }
.clip .rows { margin-left: 2px; }
.slides { width: 119px; }
.slides .big { width: 42px; }
.slides .rows { margin-left: 2px; }
.font { width: 209px; }
.para { width: 293px; }
.draw { width: 335px; }
.edit { width: 86px; padding-left: 6px; }
.webex { width: 93px; }
.webex .gbody { padding-left: 5px; gap: 4px; }
.webex .big { width: 44px; }
.webex .big + .big { width: 34px; }
.strip { display: flex; height: 28px; }
.strip svg { margin-left: -1px; }
.font .strip:first-child { margin-top: 5px; padding-left: 3px; }
.combo { width: 90px; height: 22px; margin-top: 4px; border: 1px solid #c6c6c6; background: #fff; display: flex; justify-content: flex-end; align-items: center; padding-right: 4px; }
.combo.size { width: 44px; margin-left: -1px; justify-content: space-between; padding-left: 4px; }
.combo .c { color: #999; }
.shapes { margin: 3px 0 0 4px; }
.arr { width: 44px; margin-left: 3px; }
.quick { width: 44px; margin-right: 1px; }
.collapse { position: absolute; right: 8px; bottom: 4px; }

.work { height: 652px; background: #e6e6e6; display: flex; border-bottom: 1px solid #c6c6c6; }
.thumbs { width: 229px; border-right: 1px solid #bbb; margin-top: 2px; padding: 18px 0 0 10px; }
.trow { display: flex; gap: 7px; margin-bottom: 18px; }
.trow b { font-weight: 400; font-size: 14px; line-height: 14px; width: 8px; color: #555; text-align: center; margin-top: -2px; }
.trow.sel b { color: #d24726; margin-top: -1px; }
.thumb { width: 180px; height: 102px; border: 1px solid #fff; outline: 1px solid #c8c8c8; position: relative; }
.sel .thumb { outline: 2px solid #f96c48; margin-top: 1px; height: 103px; }
.thumb > i { position: absolute; right: 16px; top: 0; width: 10px; height: 16px; background: #b01513; }
.thumb, .slide { background: linear-gradient(90deg, #10394a00 80%, #10394b99 98%), radial-gradient(ellipse 7% 12% at 72% 6%, #25656b88, #25656b00), radial-gradient(ellipse 16% 24% at 3% 60%, #205a6999, #205a6900), radial-gradient(ellipse 5% 8% at 75% 96%, #24636855, #24636800), radial-gradient(ellipse 56% 78% at 46.500% 50%, #42806f 0, #3c776d 28%, #306862 50%, #225457 75%, #17454f 96%, #143f4d 120%); background-origin: border-box; background-color: #12404d; }
.mini { margin: 0; padding: 32px 0 0 22px; list-style: none; color: #fff; font: 700 4.600px/6.300px "Liberation Sans", sans-serif; }
.mini li::before { content: "▸"; color: #8ed6da; margin: 0 2px 0 -5px; }
.mini .gap { height: 6.500px; visibility: hidden; }
.mini .s { padding-left: 6px; font-size: 3.500px; line-height: 6.100px; }

.canvas { width: 1277px; padding: 11px 0 0 83px; }
.slide { width: 1112px; height: 626px; position: relative; padding-top: 184.500px; border-top: 1px solid #566f7d; }
.slide > i { position: absolute; left: 951px; top: 0; width: 63px; height: 103px; background: #b01513; box-shadow: 0 1px 3px #0006; }
.slide ul { margin: 0; padding: 0; list-style: none; color: #fff; font: 400 24px/39px Lato, sans-serif; }
.slide li { display: flex; align-items: center; height: 39.200px; padding-left: 111px; white-space: pre; }
.slide li::before { content: ""; border: solid transparent; border-width: 7px 0 7px 13px; border-left-color: #86d0d5; margin: 1px 16px 0 0; }
.slide li.l1 { margin-bottom: 40px; }
.slide .k { letter-spacing: -1.400px; }
.slide .k.de { letter-spacing: -.8px; }
.slide .h { letter-spacing: -.85px; }
.slide .jp { letter-spacing: -.1px; }
.slide .ja { letter-spacing: .6px; }
.slide .good { font-size: 26px; letter-spacing: .9px; margin-left: 1px; }
.slide li.s { padding-left: 152px; font-size: 22px; height: 36.400px; line-height: 36px; letter-spacing: .62px; padding-top: 2px; }
.slide li.s3 { letter-spacing: -.5px; }
.slide li.s::before { border-width: 7px 0 7px 12px; margin: 0 13px 0 0; }

.vscroll { margin-left: auto; width: 15px; padding-top: 3px; display: flex; flex-direction: column; }
.track { height: 562px; background: #dadada; display: flex; align-items: flex-end; }
.bar { width: 15px; height: 281px; background: #fff; border: 1px solid #adadad; border-right: 0; }

.status { height: 21px; background: #f1f1f1; display: flex; align-items: center; font-size: 11px; color: #555; letter-spacing: -.15px; padding-bottom: 1px; }
.count { width: 71px; padding-left: 4px; letter-spacing: -.25px; }
.notes { margin-left: 977px; width: 60px; display: flex; gap: 4px; align-items: center; letter-spacing: -.3px; }
.comments { width: 81px; display: flex; gap: 3px; align-items: center; letter-spacing: -.7px; }
.views { margin-right: 4px; }
.plus { margin: 0 12px 0 -1px; }
.pct { width: 31px; }

.taskbar { height: 38px; background: linear-gradient(#262626 13px, #000 13px); display: flex; position: relative; }
.t { width: 49.150px; display: flex; align-items: center; justify-content: center; position: relative; flex: none; padding-top: 2px; }
.t:nth-child(4) { width: 44px; }
.t:nth-child(5) { width: 50px; }
.t:nth-child(6) { width: 52px; }
.run::after { content: ""; position: absolute; left: 4px; right: 4px; bottom: 0; height: 1px; background: #6686ad; }
.cur { background: linear-gradient(#585858 13px, #404040 13px); }
.ghost { position: absolute; top: 1px; font: 12px/17px "Liberation Sans", sans-serif; color: #0c0c0c; }
.g1 { left: 243px; font-weight: 700; font-size: 10px; }
.g2 { left: 893px; font-size: 8.500px; font-weight: 700; }
.g3 { left: 934px; font-style: italic; font-size: 11px; }
.badge { position: absolute; left: 867px; top: 2px; }
.tray { margin-left: auto; display: flex; align-items: center; padding-top: 2px; }
.clock { color: #fff; font-size: 11.500px; line-height: 18px; width: 63px; text-align: center; margin-left: 5px; margin-right: 14px; letter-spacing: -.2px; }
.peek { width: 4px; height: 36px; border-left: 1px solid #555; margin-left: 19px; }
.watermark { position: absolute; left: 1442px; top: 774px; opacity: .8; mix-blend-mode: multiply; }

.people { border-right: 1px solid #ccc; color: #333; font-size: 12.500px; letter-spacing: -.1px; }
.people header { height: 37px; background: #eee; display: flex; align-items: center; padding: 0 10px; font-size: 14px; color: #666; }
.people header span { margin-left: 7px; letter-spacing: -.45px; padding-top: 1px; }
.gear { margin-left: auto; margin-right: 18px; }
.p { height: 30px; border-bottom: 1px solid #ebebeb; display: flex; align-items: center; }
.p.last { border: 0; }
.i { width: 37px; padding-left: 6px; }
.j { width: 32px; }
.p small { font-size: 11px; color: #666; margin-left: 3px; letter-spacing: -.3px; }
.pill { width: 28px; height: 24px; border: 1px solid #d5d5d5; border-radius: 4px; display: grid; place-items: center; margin-left: 4px; }
.p small + .pill { margin-left: auto; }
.pill:last-child { margin-right: 42px; }

.foot { height: 42px; margin-top: -1px; border-top: 1px solid #c4c4c4; display: flex; align-items: center; padding: 2px 34px 0 15px; font-size: 12px; letter-spacing: -.1px; color: #555; flex: none; background: #eee; position: relative; }
.cisco { font-size: 10px; font-weight: 600; line-height: 12px; letter-spacing: .6px; color: #b5b5b5; text-align: center; margin-right: auto; padding-top: 2px; }
.foot > i { width: 9px; height: 9px; border-radius: 50%; background: #3ccb1b; margin-left: 9px; }
.os { height: 9px; background: #232323; flex: none; }
.os div { width: 45px; height: 9px; margin-left: 415px; background: #525252; }
```
